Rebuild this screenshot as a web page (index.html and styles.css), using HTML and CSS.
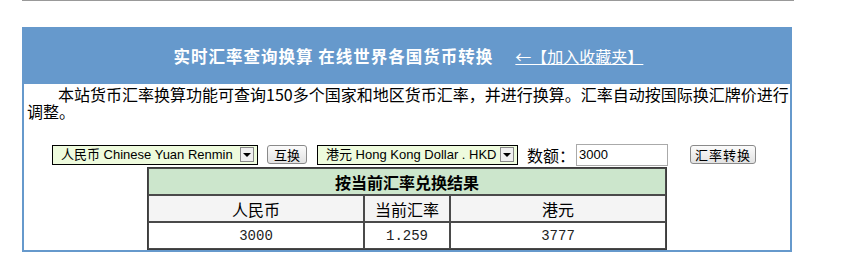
FILE: index.html
```html
<!DOCTYPE html>
<html lang="zh-CN">
<head>
    <meta charset="UTF-8">
    <title>实时汇率查询换算</title>
    <link rel="stylesheet" href="styles.css">
</head>
<body>
    <div class="topline"></div>
    <div class="box">
        <div class="box-head">
            <span class="box-title">实时汇率查询换算 在线世界各国货币转换</span>
            <a class="fav" href="#">←【加入收藏夹】</a>
        </div>
        <p class="intro">本站货币汇率换算功能可查询150多个国家和地区货币汇率，并进行换算。汇率自动按国际换汇牌价进行调整。</p>
        <form class="convert">
            <span class="sel sel-from">
                <select name="from">
                    <option>人民币 Chinese Yuan Renmin</option>
                </select>
                <span class="sel-arrow"></span>
            </span>
            <button type="button" class="btn btn-swap">互换</button>
            <span class="sel sel-to">
                <select name="to">
                    <option>港元 Hong Kong Dollar . HKD</option>
                </select>
                <span class="sel-arrow"></span>
            </span>
            <label class="amount-label" for="amount">数额：</label>
            <input type="text" id="amount" class="amount" value="3000">
            <button type="button" class="btn btn-go">汇率转换</button>
        </form>
        <table class="result">
            <tr>
                <th colspan="3">按当前汇率兑换结果</th>
            </tr>
            <tr class="result-names">
                <td class="col-a">人民币</td>
                <td class="col-b">当前汇率</td>
                <td class="col-c">港元</td>
            </tr>
            <tr class="result-values">
                <td>3000</td>
                <td>1.259</td>
                <td>3777</td>
            </tr>
        </table>
    </div>
</body>
</html>
```

FILE: styles.css
```css
body {
    margin: 0;
    font-family: "Noto Sans CJK SC", "Liberation Sans", sans-serif;
    font-size: 16px;
    color: #000;
    background-color: #fff;
}

.topline {
    margin-left: 22px;
    width: 772px;
    border-top: 1px solid #999;
}

.box {
    margin: 26px 0 0 22px;
    width: 766px;
    border: 2px solid #6699cc;
    border-top: none;
}

.box-head {
    height: 57px;
    display: flex;
    align-items: center;
    justify-content: center;
    background-color: #6699cc;
    color: #fff;
    padding-left: 3px;
}

.box-title {
    font-weight: bold;
    font-size: 16.5px;
    letter-spacing: 1px;
}

.fav {
    margin-left: 22px;
    color: #fff;
    text-decoration: underline;
}

.intro {
    margin: 0;
    padding: 2px 0 0 3px;
    line-height: 17px;
    text-indent: 31px;
}

.convert {
    display: flex;
    align-items: center;
    height: 23px;
    margin-top: 23px;
    padding-left: 28px;
    font-size: 13px;
}

.sel {
    display: inline-flex;
    align-items: center;
    box-sizing: border-box;
    height: 20px;
    border: 1px solid #000;
    background-color: #eefbdd;
    padding-right: 3px;
}

.sel-from {
    width: 206px;
}

.sel-to {
    width: 201px;
    margin-left: 10px;
}

.sel select {
    flex: 1;
    min-width: 0;
    appearance: none;
    -webkit-appearance: none;
    border: none;
    background: transparent;
    font-family: "Liberation Sans", "Noto Sans CJK SC", sans-serif;
    font-size: 13px;
    color: #000;
    padding: 0 0 0 8px;
    height: 18px;
    outline: none;
}

.sel-arrow {
    display: flex;
    align-items: center;
    justify-content: center;
    box-sizing: border-box;
    width: 14px;
    height: 15px;
    border: 1px solid #888;
    background-color: #f0f0f0;
}

.sel-arrow::after {
    content: "";
    border-left: 4px solid transparent;
    border-right: 4px solid transparent;
    border-top: 4px solid #000;
}

.btn {
    box-sizing: border-box;
    height: 19px;
    padding: 0 4px;
    border: 1px solid #8a8a8a;
    border-radius: 3px;
    background: linear-gradient(#fbfbfb, #e2e2e2);
    font-family: "Noto Sans CJK SC", sans-serif;
    font-size: 13px;
    line-height: 15px;
    color: #000;
}

.btn-swap {
    width: 40px;
    margin-left: 9px;
}

.btn-go {
    width: 66px;
    margin-left: 22px;
    letter-spacing: 1px;
}

.amount-label {
    margin-left: 9px;
    font-size: 16px;
}

.amount {
    box-sizing: border-box;
    width: 92px;
    height: 22px;
    margin-left: 1px;
    padding: 0 2px;
    border: 1px solid #aaa;
    font-family: "Liberation Sans", sans-serif;
    font-size: 13px;
}

.result {
    width: 520px;
    margin: 1px auto 0;
    border: 1px solid #3c3c3c;
    border-spacing: 0;
}

.result th,
.result td {
    height: 25px;
    padding: 0;
    border: 1px solid #4a4a4a;
    text-align: center;
    line-height: 22px;
}

.result th {
    background-color: #cce6cc;
    font-weight: bold;
}

.result-names td {
    background-color: #f4f4f4;
}

.result-values td {
    font-family: "Liberation Mono", monospace;
    font-size: 14px;
    color: #222;
}

.col-a {
    width: 214px;
}

.col-b {
    width: 84px;
}
```
